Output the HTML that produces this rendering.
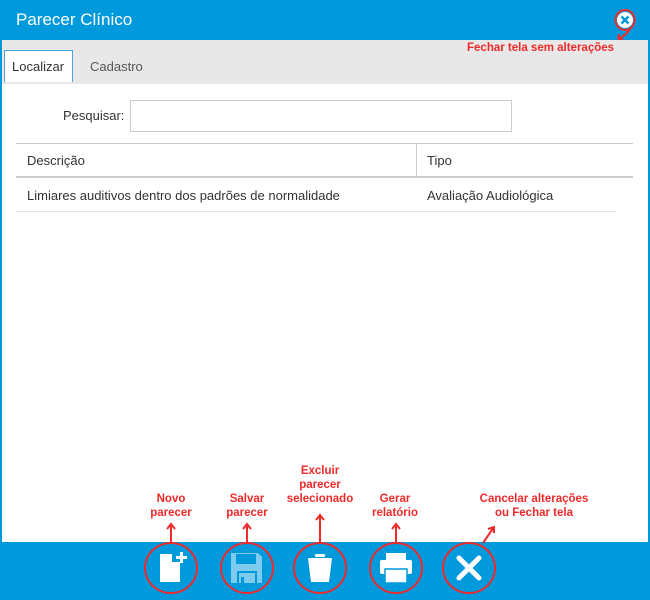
<!DOCTYPE html>
<html><head><meta charset="utf-8"><style>
*{margin:0;padding:0;box-sizing:border-box}
body{width:650px;height:600px;background:#0099dc;font-family:"Liberation Sans",sans-serif;position:relative;overflow:hidden}
.abs{position:absolute}
.main{left:2px;top:40px;width:646px;height:502px;background:#fff}
.tabs{left:2px;top:40px;width:646px;height:44px;background:#e8e8e8}
.note{color:#f02a2a;font-weight:bold;font-size:11.5px;text-align:center;line-height:14px;font-family:"Liberation Sans",sans-serif}
.t{font-size:13px;color:#333}
</style></head><body>
<div class="abs" style="left:16px;top:10px;color:#fff;font-size:17px">Parecer Clínico</div>
<div class="abs main"></div>
<div class="abs tabs"></div>
<div class="abs" style="left:4px;top:50px;width:69px;height:32px;background:#fff;border:1px solid #4aa6dc;border-bottom:none"></div>
<div class="abs t" style="left:12px;top:59px">Localizar</div>
<div class="abs t" style="left:90px;top:59px;color:#555">Cadastro</div>
<div class="abs t" style="left:63px;top:108px">Pesquisar:</div>
<div class="abs" style="left:130px;top:100px;width:382px;height:32px;border:1px solid #ccc"></div>
<div class="abs" style="left:16px;top:143px;width:617px;height:1px;background:#ccc"></div>
<div class="abs" style="left:416px;top:143px;width:1px;height:34px;background:#ccc"></div>
<div class="abs" style="left:16px;top:176px;width:617px;height:2px;background:#ccc"></div>
<div class="abs" style="left:16px;top:211px;width:600px;height:1px;background:#e4e4e4"></div>
<div class="abs t" style="left:27px;top:153px">Descrição</div>
<div class="abs t" style="left:427px;top:153px">Tipo</div>
<div class="abs t" style="left:27px;top:188px">Limiares auditivos dentro dos padrões de normalidade</div>
<div class="abs t" style="left:427px;top:188px">Avaliação Audiológica</div>
<!-- top close -->
<svg class="abs" style="left:600px;top:8px" width="40" height="40" viewBox="0 0 40 40">
<circle cx="25" cy="12" r="8" fill="#fff"/>
<path d="M21.5 8.5l7 7M28.5 8.5l-7 7" stroke="#0099dc" stroke-width="2.6"/>
<ellipse cx="25" cy="12" rx="9.5" ry="10" fill="none" stroke="#f02a2a" stroke-width="2"/>
<path d="M31 19q-4 8-13 12M18 31l5 0M18 31l1-5" fill="none" stroke="#f02a2a" stroke-width="2"/>
</svg>
<div class="abs note" style="left:467px;top:41px">Fechar tela sem alterações</div>
<!-- notes -->
<div class="abs note" style="left:140px;top:492px;width:62px">Novo<br>parecer</div>
<div class="abs note" style="left:216px;top:492px;width:62px">Salvar<br>parecer</div>
<div class="abs note" style="left:280px;top:464px;width:80px">Excluir<br>parecer<br>selecionado</div>
<div class="abs note" style="left:364px;top:492px;width:62px">Gerar<br>relatório</div>
<div class="abs note" style="left:474px;top:492px;width:120px">Cancelar alterações<br>ou Fechar tela</div>
<svg class="abs" style="left:0;top:455px" width="650" height="145" viewBox="0 455 650 145">
<g fill="none" stroke="#f02a2a" stroke-width="2">
<ellipse cx="171" cy="568" rx="26" ry="25"/>
<ellipse cx="247" cy="568" rx="26" ry="25"/>
<ellipse cx="320" cy="568" rx="26" ry="25"/>
<ellipse cx="396" cy="568" rx="26" ry="25"/>
<ellipse cx="469" cy="568" rx="26" ry="25"/>
<path d="M171 543v-18M167 529l4-5 4 5"/>
<path d="M247 543v-18M243 529l4-5 4 5"/>
<path d="M320 543v-27M316 520l4-5 4 5"/>
<path d="M396 543v-18M392 529l4-5 4 5"/>
<path d="M483 543l11-16M488 529l6-2 0 6"/>
</g>
<path d="M160 554h12v8h8v20h-20z" fill="#fff"/>
<path d="M176 556h4v-4h3v4h4v3h-4v4h-3v-4h-4z" fill="#fff"/>
<path d="M231 553h27l4 4v26h-31z" fill="#7fcbee"/><rect x="236" y="554" width="20" height="10" fill="#0099dc"/><rect x="237" y="571" width="20" height="12" fill="#0099dc"/><rect x="239" y="573" width="16" height="10" fill="#7fcbee"/><rect x="241" y="577" width="3" height="6" fill="#0099dc"/>
<rect x="315" y="554" width="10" height="3" rx="1" fill="#fff"/><path d="M308 558h24l-3 24h-18z" fill="#fff"/>
<rect x="386" y="553" width="20" height="7" fill="#fff"/><rect x="380" y="560" width="32" height="14" rx="2" fill="#fff"/><rect x="385" y="569" width="22" height="14" fill="#fff" stroke="#0099dc" stroke-width="1.5"/>
<path d="M459 558l20 20M479 558l-20 20" stroke="#fff" stroke-width="5" stroke-linecap="round"/>
</svg>
</body></html>
